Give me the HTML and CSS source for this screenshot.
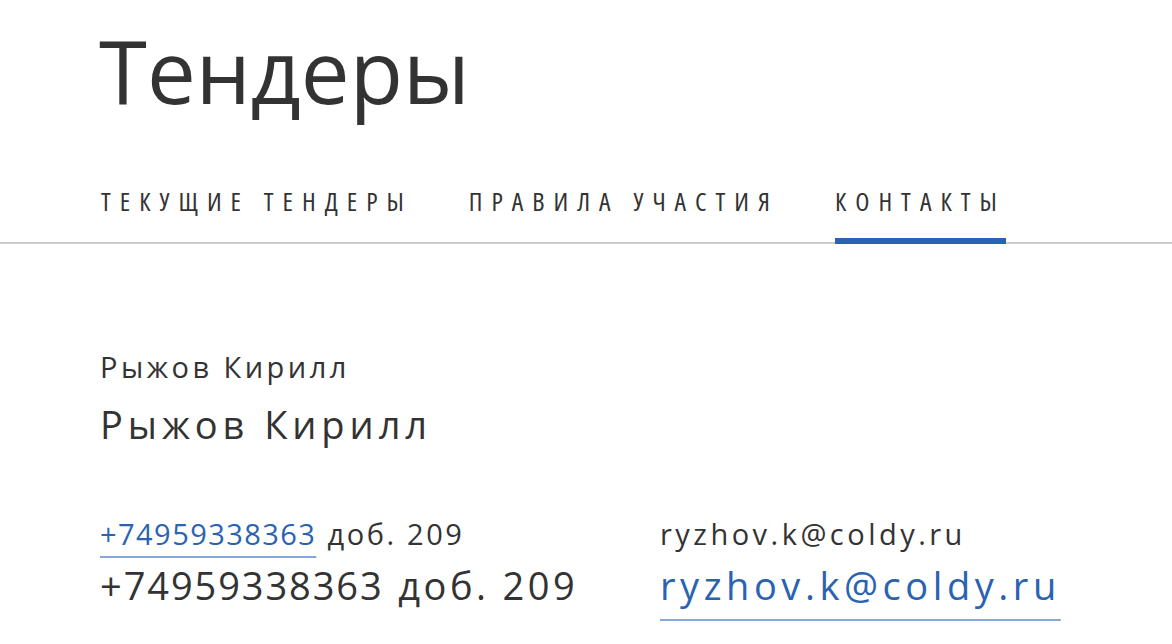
FILE: index.html
```html
<!DOCTYPE html>
<html lang="ru">
<head>
<meta charset="utf-8">
<title>Тендеры</title>
<link rel="stylesheet" href="styles.css">
</head>
<body>
<header class="page-header">
  <h1 class="title">Тендеры</h1>
</header>
<nav class="tabs">
  <a class="tab" href="#">Текущие тендеры</a>
  <a class="tab" href="#">Правила участия</a>
  <a class="tab tab-active" href="#">Контакты</a>
</nav>
<main class="contact">
  <div class="person">
    <div class="label">Рыжов Кирилл</div>
    <div class="value">Рыжов Кирилл</div>
  </div>
  <div class="details">
    <div class="field">
      <div class="label"><a class="link num" href="#">+74959338363</a> <span class="ext">доб. 209</span></div>
      <div class="value"><span class="num">+74959338363</span> <span class="ext">доб. 209</span></div>
    </div>
    <div class="field">
      <div class="label">ryzhov.k@coldy.ru</div>
      <div class="value"><a class="link link-big" href="#">ryzhov.k@coldy.ru</a></div>
    </div>
  </div>
</main>
</body>
</html>
```

FILE: styles.css
```css
html, body {
  margin: 0;
  padding: 0;
  background: #ffffff;
}

body {
  min-height: 100vh;
  font-family: "Open Sans", "Noto Sans", sans-serif;
  color: #333333;
}

.page-header {
  padding: 26px 0 0 99px;
}

.title {
  margin: 0;
  font-size: 87px;
  font-weight: 400;
  line-height: 88px;
  color: #333333;
}

.tabs {
  display: flex;
  gap: 56px;
  margin-top: 74px;
  padding-left: 101px;
  border-bottom: 2px solid #cccccc;
}

.tab {
  position: relative;
  display: block;
  padding-bottom: 28px;
  font-size: 26px;
  line-height: 26px;
  font-stretch: 75%;
  letter-spacing: 9px;
  text-transform: uppercase;
  text-decoration: none;
  color: #333333;
}

.tab-active::after {
  content: "";
  position: absolute;
  left: 0;
  right: 0;
  bottom: -2px;
  height: 6px;
  background: #2a63b1;
}

.contact {
  padding: 106px 0 60px 100px;
}

.label {
  font-size: 29px;
  line-height: 34px;
  letter-spacing: 0.12em;
}

.value {
  font-size: 38px;
  line-height: 44px;
  letter-spacing: 0.13em;
}

.num {
  letter-spacing: 0.05em;
}

.ext {
  letter-spacing: 0.09em;
}

.person .value {
  margin-top: 18px;
}

.details {
  display: grid;
  grid-template-columns: 560px auto;
  margin-top: 71px;
}

.field .value {
  margin-top: 12px;
}

.link {
  color: #2a63b1;
  text-decoration: underline;
  text-decoration-color: #85a8d8;
  text-decoration-thickness: 2px;
  text-decoration-skip-ink: none;
  text-underline-offset: 11px;
}

.link-big {
  letter-spacing: 0.12em;
  text-underline-offset: 19px;
}
```
